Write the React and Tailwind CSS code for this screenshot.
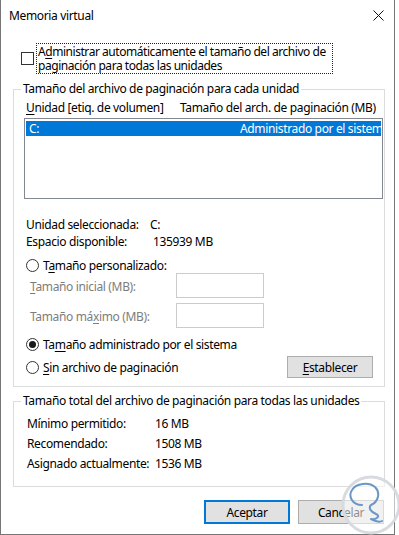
import React from "react";

function U({ children }) {
  return <span className="underline underline-offset-[2px] decoration-[1px]">{children}</span>;
}

function Radio({ checked }) {
  return (
    <span className="w-[13px] h-[13px] rounded-full border border-[#333333] bg-white flex items-center justify-center shrink-0">
      {checked && <span className="w-[7px] h-[7px] rounded-full bg-[#1a1a1a]" />}
    </span>
  );
}

export default function App() {
  return (
    <div className="w-[399px] h-[535px] bg-white relative overflow-hidden text-[12px] text-black font-['Noto_Sans',sans-serif] tracking-[-0.35px]">
      <div className="w-[395px] h-[535px] border-l border-r border-b border-[#767676] flex flex-col">
        {/* Title bar */}
        <div className="h-[30px] flex items-center justify-between pl-[8px] pr-[9px] shrink-0">
          <span className="leading-[15px]">Memoria virtual</span>
          <svg width="11" height="11" viewBox="0 0 11 11" className="mr-[1px]">
            <path d="M0.5 0.5 L10.5 10.5 M10.5 0.5 L0.5 10.5" stroke="#111" strokeWidth="1" fill="none" />
          </svg>
        </div>

        {/* Auto checkbox */}
        <div className="mt-[13px] ml-[20px] h-[31px] flex items-center shrink-0">
          <span className="w-[13px] h-[13px] border border-[#333333] bg-white shrink-0" />
          <div className="ml-[2px] w-[297px] h-[31px] border border-dotted border-[#222] px-[1px] pt-[1px] leading-[14px] whitespace-nowrap tracking-[-0.45px]">
            <div>A<U>d</U>ministrar automáticamente el tamaño del archivo de</div>
            <div>paginación para todas las unidades</div>
          </div>
        </div>

        {/* Group 1 */}
        <fieldset className="mt-[8px] ml-[12px] w-[372px] h-[305px] border border-[#dcdcdc] shrink-0">
          <legend className="ml-[7px] px-[2px] leading-[14px]">Tamaño del archivo de paginación para cada unidad</legend>
          <div className="mt-[4px] h-[15px] leading-[15px] flex">
            <span className="ml-[12px] w-[154px]"><U>U</U>nidad [etiq. de volumen]</span>
            <span>Tamaño del arch. de paginación (MB)</span>
          </div>
          <div className="mt-[3px] ml-[10px] w-[359px] h-[81px] border border-[#828790] bg-white pt-[2px] px-[1px]">
            <div className="h-[15px] bg-[#0078d7] text-white leading-[15px] flex overflow-hidden">
              <span className="w-[214px] pl-[3px] shrink-0">C:</span>
              <span className="flex-1 overflow-hidden whitespace-nowrap">Administrado por el sistema</span>
            </div>
          </div>

          <div className="mt-[17px] h-[17px] leading-[17px] flex">
            <span className="ml-[12px] w-[124px]">Unidad seleccionada:</span>
            <span>C:</span>
          </div>
          <div className="h-[17px] leading-[17px] flex">
            <span className="ml-[12px] w-[127px]">Espacio disponible:</span>
            <span>135939 MB</span>
          </div>

          <div className="mt-[8px] h-[15px] flex items-center ml-[12px]">
            <Radio />
            <span className="ml-[4px] leading-[15px]">T<U>a</U>maño personalizado:</span>
          </div>
          <div className="h-[25px] flex items-center">
            <span className="ml-[16px] w-[146px] text-[#7d7d7d] leading-[15px] pt-[2px]"><U>T</U>amaño inicial (MB):</span>
            <span className="w-[88px] h-[25px] border border-[#cccccc] bg-white" />
          </div>
          <div className="mt-[5px] h-[25px] flex items-center">
            <span className="ml-[16px] w-[146px] text-[#7d7d7d] leading-[15px] pt-[2px]">Tamaño má<U>x</U>imo (MB):</span>
            <span className="w-[88px] h-[25px] border border-[#cccccc] bg-white" />
          </div>

          <div className="mt-[8px] h-[17px] flex items-center ml-[12px]">
            <Radio checked />
            <span className="ml-[4px] leading-[15px]">Ta<U>m</U>año administrado por el sistema</span>
          </div>
          <div className="mt-[3px] h-[22px] flex items-center">
            <div className="ml-[12px] w-[261px] flex items-center">
              <Radio />
              <span className="ml-[4px] leading-[15px]"><U>S</U>in archivo de paginación</span>
            </div>
            <button className="w-[86px] h-[22px] bg-[#e1e1e1] border border-[#adadad] leading-[15px] flex items-center justify-center">
              <span><U>E</U>stablecer</span>
            </button>
          </div>
        </fieldset>

        {/* Group 2 */}
        <fieldset className="mt-[7px] ml-[12px] w-[372px] h-[93px] border border-[#dcdcdc] shrink-0">
          <legend className="ml-[7px] px-[2px] leading-[14px]">Tamaño total del archivo de paginación para todas las unidades</legend>
          <div className="mt-[6px] h-[20px] leading-[20px] flex">
            <span className="ml-[13px] w-[128px]">Mínimo permitido:</span>
            <span>16 MB</span>
          </div>
          <div className="h-[20px] leading-[20px] flex">
            <span className="ml-[13px] w-[128px]">Recomendado:</span>
            <span>1508 MB</span>
          </div>
          <div className="h-[20px] leading-[20px] flex">
            <span className="ml-[13px] w-[128px]">Asignado actualmente:</span>
            <span>1536 MB</span>
          </div>
        </fieldset>

        {/* Buttons */}
        <div className="mt-[13px] flex justify-end gap-[8px] pr-[10px]">
          <button className="w-[86px] h-[24px] bg-[#e1e1e1] border-2 border-[#0078d7] leading-[15px]">Aceptar</button>
          <button className="w-[86px] h-[24px] bg-[#e1e1e1] border border-[#adadad] leading-[15px]">Cancelar</button>
        </div>
      </div>

      {/* Watermark */}
      <svg className="absolute left-[340px] top-[474px]" width="62" height="62" viewBox="0 0 62 62">
        <circle cx="31" cy="31" r="28" fill="rgba(255,255,255,0.55)" stroke="#d7dbe0" strokeWidth="3" />
        <path
          d="M22 31 C12 31 8 22 12 16 C16 9 29 8 35 13 C41 19 38 28 31 31 C28 34 31 38 36 40 C41 42 36 46 31 45 C35 47 39 49 42 47"
          fill="none"
          stroke="#6b96c8"
          strokeWidth="2"
          strokeLinecap="round"
          strokeLinejoin="round"
        />
      </svg>
    </div>
  );
}
